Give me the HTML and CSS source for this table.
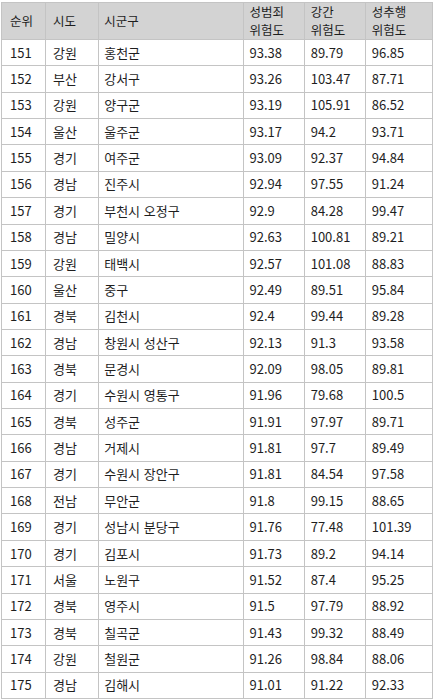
FILE: index.html
```html
<!DOCTYPE html>
<html lang="ko">
<head>
<meta charset="utf-8">
<link rel="stylesheet" href="styles.css">
</head>
<body>
<table class="rank">
<colgroup>
<col class="c-rank"><col class="c-sido"><col class="c-sgg"><col class="c-num"><col class="c-num"><col class="c-num3">
</colgroup>
<thead>
<tr><th class="p-rank">순위</th><th class="p-sido">시도</th><th class="p-sgg">시군구</th><th>성범죄<br>위험도</th><th>강간<br>위험도</th><th>성추행<br>위험도</th></tr>
</thead>
<tbody>
<tr><td>151</td><td>강원</td><td>홍천군</td><td>93.38</td><td>89.79</td><td>96.85</td></tr>
<tr><td>152</td><td>부산</td><td>강서구</td><td>93.26</td><td>103.47</td><td>87.71</td></tr>
<tr><td>153</td><td>강원</td><td>양구군</td><td>93.19</td><td>105.91</td><td>86.52</td></tr>
<tr><td>154</td><td>울산</td><td>울주군</td><td>93.17</td><td>94.2</td><td>93.71</td></tr>
<tr><td>155</td><td>경기</td><td>여주군</td><td>93.09</td><td>92.37</td><td>94.84</td></tr>
<tr><td>156</td><td>경남</td><td>진주시</td><td>92.94</td><td>97.55</td><td>91.24</td></tr>
<tr><td>157</td><td>경기</td><td>부천시 오정구</td><td>92.9</td><td>84.28</td><td>99.47</td></tr>
<tr><td>158</td><td>경남</td><td>밀양시</td><td>92.63</td><td>100.81</td><td>89.21</td></tr>
<tr><td>159</td><td>강원</td><td>태백시</td><td>92.57</td><td>101.08</td><td>88.83</td></tr>
<tr><td>160</td><td>울산</td><td>중구</td><td>92.49</td><td>89.51</td><td>95.84</td></tr>
<tr><td>161</td><td>경북</td><td>김천시</td><td>92.4</td><td>99.44</td><td>89.28</td></tr>
<tr><td>162</td><td>경남</td><td>창원시 성산구</td><td>92.13</td><td>91.3</td><td>93.58</td></tr>
<tr><td>163</td><td>경북</td><td>문경시</td><td>92.09</td><td>98.05</td><td>89.81</td></tr>
<tr><td>164</td><td>경기</td><td>수원시 영통구</td><td>91.96</td><td>79.68</td><td>100.5</td></tr>
<tr><td>165</td><td>경북</td><td>성주군</td><td>91.91</td><td>97.97</td><td>89.71</td></tr>
<tr><td>166</td><td>경남</td><td>거제시</td><td>91.81</td><td>97.7</td><td>89.49</td></tr>
<tr><td>167</td><td>경기</td><td>수원시 장안구</td><td>91.81</td><td>84.54</td><td>97.58</td></tr>
<tr><td>168</td><td>전남</td><td>무안군</td><td>91.8</td><td>99.15</td><td>88.65</td></tr>
<tr><td>169</td><td>경기</td><td>성남시 분당구</td><td>91.76</td><td>77.48</td><td>101.39</td></tr>
<tr><td>170</td><td>경기</td><td>김포시</td><td>91.73</td><td>89.2</td><td>94.14</td></tr>
<tr><td>171</td><td>서울</td><td>노원구</td><td>91.52</td><td>87.4</td><td>95.25</td></tr>
<tr><td>172</td><td>경북</td><td>영주시</td><td>91.5</td><td>97.79</td><td>88.92</td></tr>
<tr><td>173</td><td>경북</td><td>칠곡군</td><td>91.43</td><td>99.32</td><td>88.49</td></tr>
<tr><td>174</td><td>강원</td><td>철원군</td><td>91.26</td><td>98.84</td><td>88.06</td></tr>
<tr><td>175</td><td>경남</td><td>김해시</td><td>91.01</td><td>91.22</td><td>92.33</td></tr>
</tbody>
</table>
</body>
</html>
```
FILE: styles.css
```css
html, body {
  margin: 0;
  padding: 0;
  background: #ffffff;
}
body {
  padding: 2px 0 0 1px;
  font-family: "Noto Sans CJK KR", "Noto Sans", sans-serif;
  font-size: 13px;
  color: #1e1e1e;
}
.rank {
  border-collapse: collapse;
  table-layout: fixed;
  width: 432px;
}
.c-rank { width: 44px; }
.c-sido { width: 53px; }
.c-sgg { width: 144px; }
.c-num { width: 61px; }
.c-num3 { width: 67px; }
.rank th, .rank td {
  border: 1px solid #c4c4c4;
  padding: 0 0 0 6px;
  text-align: left;
  vertical-align: middle;
  white-space: nowrap;
  overflow: hidden;
}
.rank td:nth-child(1), .rank .p-rank { padding-left: 8px; }
.rank td:nth-child(2), .rank .p-sido { padding-left: 7px; }
.rank td:nth-child(3), .rank .p-sgg { padding-left: 5px; }
.rank th {
  background: #d3d3d3;
  font-weight: normal;
  font-size: 12.5px;
  line-height: 18px;
  height: 36px;
}
.rank td {
  height: 25.36px;
  line-height: 16px;
}
```
